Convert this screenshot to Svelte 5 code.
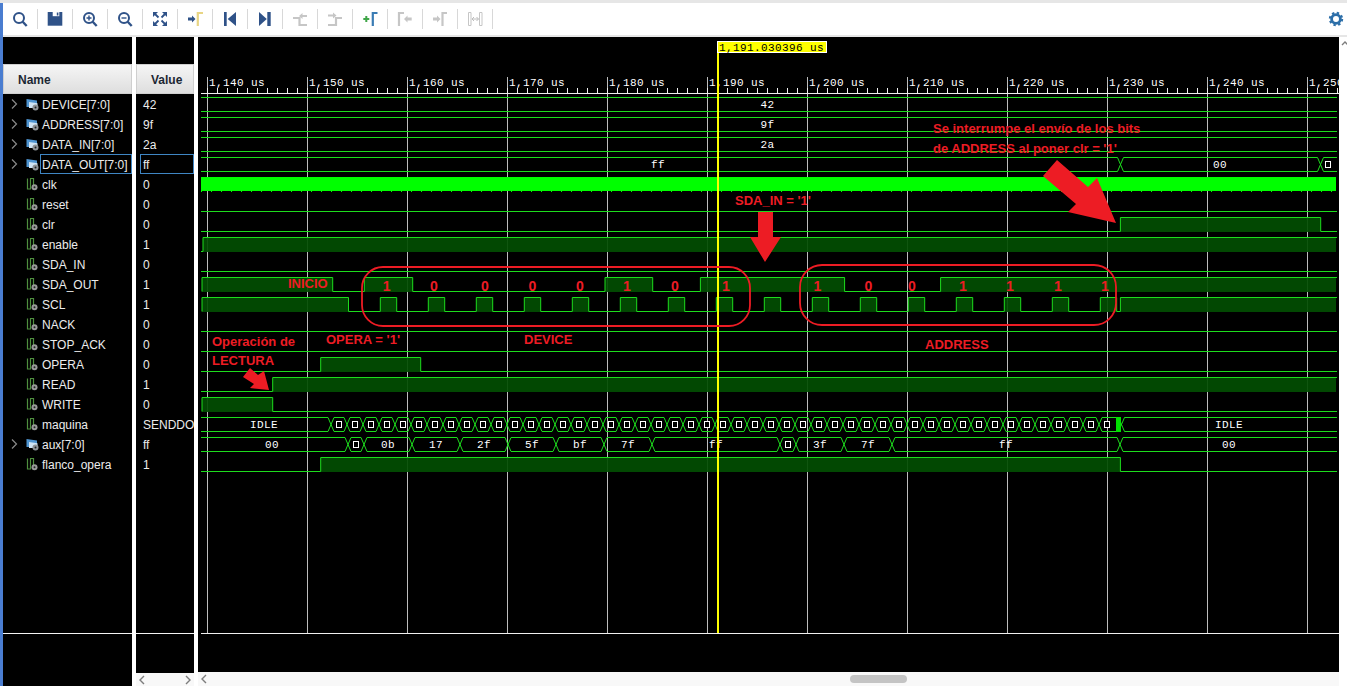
<script>
  const X0 = 201;
  const X1 = 1337;
  const top = (i) => 97.5 + 20 * i;
  const bot = (i) => 111.5 + 20 * i;

  const signals = [
    { name: 'DEVICE[7:0]', value: '42', bus: true },
    { name: 'ADDRESS[7:0]', value: '9f', bus: true },
    { name: 'DATA_IN[7:0]', value: '2a', bus: true },
    { name: 'DATA_OUT[7:0]', value: 'ff', bus: true, selected: true },
    { name: 'clk', value: '0' },
    { name: 'reset', value: '0' },
    { name: 'clr', value: '0' },
    { name: 'enable', value: '1' },
    { name: 'SDA_IN', value: '0' },
    { name: 'SDA_OUT', value: '1' },
    { name: 'SCL', value: '1' },
    { name: 'NACK', value: '0' },
    { name: 'STOP_ACK', value: '0' },
    { name: 'OPERA', value: '0' },
    { name: 'READ', value: '1' },
    { name: 'WRITE', value: '0' },
    { name: 'maquina', value: 'SENDDO' },
    { name: 'aux[7:0]', value: 'ff', bus: true },
    { name: 'flanco_opera', value: '1' }
  ];

  // high intervals of the one bit signals
  const scl = [[202, 348.5]];
  for (let k = 0; k < 16; k++) scl.push([380.3 + 48 * k, 396.7 + 48 * k]);
  scl.push([1120.4, 1336]);

  const digital = [
    { row: 5, high: [] },
    { row: 6, high: [[1120.4, 1320.7]] },
    { row: 7, high: [[203, 1336]] },
    { row: 8, high: [] },
    { row: 9, high: [[202, 332.7], [364.3, 412.7], [605, 652.7], [700.4, 844.6], [940.6, 1336]] },
    { row: 10, high: scl },
    { row: 11, high: [] },
    { row: 12, high: [] },
    { row: 13, high: [[320.7, 420.7]] },
    { row: 14, high: [[272.7, 1336]] },
    { row: 15, high: [[202, 272.7]] },
    { row: 18, high: [[320.7, 1120.4]] }
  ];

  function outline(row, high) {
    const t = top(row);
    const b = bot(row);
    let d = `M${X0} ${b}`;
    if (high.length && high[0][0] < 203) d = `M${high[0][0]} ${b}`;
    for (const [a, e] of high) {
      d += `H${a}V${t}H${e}`;
      if (e < 1336) d += `V${b}`;
    }
    d += `H${X1}`;
    return d;
  }

  function busPath(row, xs) {
    const t = top(row);
    const b = bot(row);
    const w = 3;
    let d = '';
    let from = X0;
    for (const x of xs) {
      d += `M${from} ${t}H${x - w}M${from} ${b}H${x - w}`;
      d += `M${x - w} ${t}L${x + w} ${b}M${x - w} ${b}L${x + w} ${t}`;
      from = x + w;
    }
    d += `M${from} ${t}H${X1}M${from} ${b}H${X1}`;
    return d;
  }

  const maquinaXs = [];
  const maquinaBoxes = [];
  for (let k = 0; k < 49; k++) {
    maquinaXs.push(331 + 16 * k);
    maquinaBoxes.push(339 + 16 * k);
  }
  maquinaXs.push(1121.5);

  const buses = [
    { row: 0, xs: [], labels: [[767.5, '42']], boxes: [] },
    { row: 1, xs: [], labels: [[767.5, '9f']], boxes: [] },
    { row: 2, xs: [], labels: [[767.5, '2a']], boxes: [] },
    { row: 3, xs: [1120.5, 1320.5], labels: [[658, 'ff'], [1220, '00']], boxes: [1328] },
    { row: 16, xs: maquinaXs, labels: [[264, 'IDLE'], [1229, 'IDLE']], boxes: maquinaBoxes },
    {
      row: 17,
      xs: [348, 364, 412, 460, 508, 556, 604, 652, 780, 796, 844, 892, 1120],
      labels: [
        [272, '00'], [388, '0b'], [436, '17'], [484, '2f'], [532, '5f'], [580, 'bf'],
        [628, '7f'], [716, 'ff'], [820, '3f'], [868, '7f'], [1006, 'ff'], [1229, '00']
      ],
      boxes: [356, 788]
    }
  ];

  const majors = [];
  for (let k = 0; k < 12; k++) majors.push({ x: 207 + 100 * k, label: `1,${140 + 10 * k} us` });
  const minors = [];
  for (let x = 207; x < 1338; x += 10) minors.push(x);

  const bits = [
    [386.7, '1'], [434, '0'], [485, '0'], [532.5, '0'], [580, '0'], [627, '1'], [675, '0'], [726, '1'],
    [817.4, '1'], [868.5, '0'], [912, '0'], [963, '1'], [1010, '1'], [1058, '1'], [1105, '1']
  ];
</script>

<div class="strip"></div>
<div class="shell">
  <div class="toolbar">
    <button aria-label="Search">
      <svg viewBox="0 0 20 20"><circle cx="9" cy="9" r="5" class="ring" /><path d="M12.7 12.7L16.7 17" class="handle" /></svg>
    </button>
    <button aria-label="Save">
      <svg viewBox="0 0 20 20"><path d="M2.7 3H17.3V16.7H2.7Z" fill="#2f5288" /><path d="M7.7 3H14.3V7.2H7.7Z" fill="#fff" /><path d="M11.8 3.5H13.4V6.5H11.8Z" fill="#2f5288" /></svg>
    </button>
    <button aria-label="Zoom in">
      <svg viewBox="0 0 20 20"><circle cx="9" cy="9" r="5" class="ring" /><path d="M12.7 12.7L16.7 17" class="handle" /><path d="M6.5 9H11.5M9 6.5V11.5" class="mark" /></svg>
    </button>
    <button aria-label="Zoom out">
      <svg viewBox="0 0 20 20"><circle cx="9" cy="9" r="5" class="ring" /><path d="M12.7 12.7L16.7 17" class="handle" /><path d="M6.5 9H11.5" class="mark" /></svg>
    </button>
    <button aria-label="Zoom fit">
      <svg viewBox="0 0 20 20" fill="#2f5288"><path d="M3 3H8L3 8Z" /><path d="M17 3H12L17 8Z" /><path d="M3 17H8L3 12Z" /><path d="M17 17H12L17 12Z" /><path d="M5 5L8.5 8.5M15 5L11.5 8.5M5 15L8.5 11.5M15 15L11.5 11.5" stroke="#2f5288" stroke-width="1.8" /></svg>
    </button>
    <button aria-label="Go to cursor">
      <svg viewBox="0 0 20 20"><path d="M3 8.5H7V6.5L10.5 10L7 13.5V11.5H3Z" fill="#2f5288" /><path d="M12.8 17V4H18" fill="none" stroke="#e8d584" stroke-width="2.2" /></svg>
    </button>
    <button aria-label="Go to time 0">
      <svg viewBox="0 0 20 20" fill="#2f5288"><path d="M4 3H6.7V17H4Z" /><path d="M7.7 10L16 3V17Z" /></svg>
    </button>
    <button aria-label="Go to last time">
      <svg viewBox="0 0 20 20" fill="#2f5288"><path d="M4 3L11.8 10L4 17Z" /><path d="M12.3 3H15.7V17H12.3Z" /></svg>
    </button>
    <button aria-label="Previous transition">
      <svg viewBox="0 0 20 20"><path d="M3 9H9.5V16H17" class="dim" /><path d="M9 7L12.5 4V6H17V8H12.5V10Z" fill="#c6c6c6" /></svg>
    </button>
    <button aria-label="Next transition">
      <svg viewBox="0 0 20 20"><path d="M3 16H11V9H17" class="dim" /><path d="M11.5 6.5L8 3.5V5.5H3V7.5H8V9.5Z" fill="#c6c6c6" /></svg>
    </button>
    <button aria-label="Add marker">
      <svg viewBox="0 0 20 20"><path d="M3.3 10H9.3M6.3 7V13" fill="none" stroke="#3fa648" stroke-width="2" /><path d="M12.8 17V4H17.5" fill="none" stroke="#3a7cb4" stroke-width="2.2" /></svg>
    </button>
    <button aria-label="Previous marker">
      <svg viewBox="0 0 20 20"><path d="M4 17V4H9" class="dim" /><path d="M9 10L12.5 6.5V8.5H16.7V11.5H12.5V13.5Z" fill="#c6c6c6" /></svg>
    </button>
    <button aria-label="Next marker">
      <svg viewBox="0 0 20 20"><path d="M3 8.5H7V6.5L10.5 10L7 13.5V11.5H3Z" fill="#c6c6c6" /><path d="M12.5 17V4H17" class="dim" /></svg>
    </button>
    <button aria-label="Swap cursors">
      <svg viewBox="0 0 20 20"><path d="M3.5 3.5H6V16.5H3.5ZM14.5 3.5H17V16.5H14.5Z" fill="none" stroke="#c6c6c6" stroke-width="1" /><path d="M7 10H13.5M7 10L9 8M7 10L9 12M13.5 10L11.5 8M13.5 10L11.5 12" fill="none" stroke="#bdbdbd" stroke-width="1" /></svg>
    </button>
    <span class="settings">
      <svg viewBox="0 0 16 16" width="16" height="16"><circle cx="8" cy="8" r="4.4" fill="none" stroke="#2c6ea8" stroke-width="2.8" /><circle cx="8" cy="8" r="6.2" fill="none" stroke="#2c6ea8" stroke-width="2" stroke-dasharray="2.4 2.47" /></svg>
    </span>
  </div>

  <div class="panes">
    <div class="pane names">
      <div class="gutter"></div>
      <div class="head">Name</div>
      {#each signals as s}
        <div class="row">
          <span class="chev">
            {#if s.bus}
              <svg viewBox="0 0 12 12" width="12" height="12"><path d="M4 1.5L8.5 6L4 10.5" fill="none" stroke="#8a8a8a" stroke-width="1.2" /></svg>
            {/if}
          </span>
          <svg class="sig" viewBox="0 0 14 14" width="14" height="14">
            {#if s.bus}
              <path d="M0.5 2L11 3.5V10H0.5Z" fill="#4f95d2" />
              <path d="M3 5L11.5 6.2V11H3Z" fill="#cfe4f5" />
              <circle cx="9.5" cy="10.5" r="3" fill="#8f9499" />
              <circle cx="9.5" cy="10.5" r="1" fill="#20262b" />
            {:else}
              <path d="M1.5 1.5V12H4.5V1.5H7.5V8" fill="none" stroke="#4f8f3f" stroke-width="1.2" />
              <circle cx="8.5" cy="10.3" r="3" fill="#9a9a9a" />
              <circle cx="8.5" cy="10.3" r="1" fill="#222" />
            {/if}
          </svg>
          <span class="label" class:selected={s.selected}>{s.name}</span>
        </div>
      {/each}
      <div class="rule"></div>
    </div>

    <div class="pane values">
      <div class="gutter"></div>
      <div class="head">Value</div>
      {#each signals as s}
        <div class="val" class:selected={s.selected}>{s.value}</div>
      {/each}
      <div class="rule short"></div>
      <div class="hscroll ends">
        <svg viewBox="0 0 6 10" width="6" height="10"><path d="M5 1L1 5L5 9" class="arrow" /></svg>
        <svg viewBox="0 0 6 10" width="6" height="10"><path d="M1 1L5 5L1 9" class="arrow" /></svg>
      </div>
    </div>

    <div class="pane wave">
      <svg class="plot" viewBox="198 37 1141 635" width="1141" height="635">
        <!-- ruler and grid -->
        {#each majors as m}
          <line x1={m.x + 0.5} x2={m.x + 0.5} y1="77" y2="633" class="grid" />
          <text x={m.x + 2} y="86" class="mono">{m.label}</text>
        {/each}
        {#each minors as x}
          <line x1={x + 0.5} x2={x + 0.5} y1="88" y2="93" class="tick" />
        {/each}
        <line x1={X0} x2="1339" y1="93.5" y2="93.5" class="tick" />
        <line x1={X0} x2="1339" y1="633.5" y2="633.5" class="tick" />

        <!-- clk toggles too fast to show at this zoom -->
        <rect x={X0} y="177" width="1135" height="14" fill="#00ff00" />
        <line x1={X0} x2="1336" y1="191.5" y2="191.5" stroke="#00ff00" stroke-dasharray="1 9" />

        {#each digital as sig}
          {#each sig.high as [a, e]}
            <rect x={a} y={top(sig.row)} width={e - a} height="14.5" class="high" />
          {/each}
          <path d={outline(sig.row, sig.high)} class="line" />
        {/each}

        {#each buses as b}
          <path d={busPath(b.row, b.xs)} class="line" />
          {#each b.boxes as x}
            <rect x={x - 2.5} y={top(b.row) + 4} width="5" height="6" class="box" />
          {/each}
          {#each b.labels as [x, t]}
            <text {x} y={top(b.row) + 10.5} text-anchor="middle" class="mono">{t}</text>
          {/each}
        {/each}
        <rect x="1116" y="417" width="5" height="15" fill="#00e000" />

        <!-- cursor -->
        <rect x="717" y="52" width="2" height="581" fill="#ffff00" />
        <rect x="717.5" y="41.5" width="109" height="11" fill="#ffff00" stroke="#fff" />
        <text x="719" y="51" class="mono cursor">1,191.030396 us</text>

        <!-- notes drawn on top of the capture -->
        <rect x="362" y="267" width="388" height="59" rx="21" class="ring-note" />
        <rect x="800" y="265" width="316" height="60" rx="22" class="ring-note" />
        {#each bits as [x, t]}
          <text {x} y="291" text-anchor="middle" class="note bit">{t}</text>
        {/each}
        <text x="933" y="133" class="note">Se interrumpe el envío de los bits</text>
        <text x="933" y="152.5" class="note">de ADDRESS al poner clr = '1'</text>
        <text x="735" y="205" class="note">SDA_IN = '1'</text>
        <text x="288" y="288" class="note">INICIO</text>
        <text x="326" y="344" class="note">OPERA = '1'</text>
        <text x="524" y="344" class="note">DEVICE</text>
        <text x="925" y="349" class="note">ADDRESS</text>
        <text x="212" y="346" class="note">Operación de</text>
        <text x="212" y="365" class="note">LECTURA</text>
        <polygon points="1057,160 1088,187 1097,178 1116,223 1068,212 1076,204 1043,176" class="arrow-note" />
        <polygon points="758,212 773,212 773,237 781,237 765,262 750,237 758,237" class="arrow-note" />
        <polygon points="250,368 258,375 264,371 269,390 250,388 254,384 243,377" class="arrow-note" />
      </svg>
      <div class="hscroll">
        <svg viewBox="0 0 6 10" width="6" height="10"><path d="M5 1L1 5L5 9" class="arrow" /></svg>
        <span class="thumb"></span>
      </div>
    </div>

    <div class="vscroll">
      <svg viewBox="0 0 8 6" width="8" height="6"><path d="M1 5L4 2L7 5" class="arrow" /></svg>
    </div>
  </div>
</div>

<style>
  :global(body) {
    margin: 0;
    background: #fff;
  }

  .strip {
    height: 3px;
    background: #e6e6e6;
  }

  .shell {
    width: 1344px;
    height: 683px;
    border-left: 3px solid #4a7dd0;
    display: flex;
    flex-direction: column;
    overflow: hidden;
    background: #fff;
  }

  .toolbar {
    height: 32px;
    flex: none;
    display: flex;
    align-items: center;
    border-bottom: 2px solid #e6e6e6;
    background: #fff;
  }

  .toolbar button {
    position: relative;
    width: 35px;
    height: 32px;
    padding: 0;
    border: none;
    background: none;
    display: flex;
    align-items: center;
    justify-content: center;
  }

  .toolbar button::after {
    content: '';
    position: absolute;
    right: 0;
    top: 6px;
    height: 20px;
    width: 1px;
    background: #d8d8d8;
  }

  .toolbar button svg {
    width: 20px;
    height: 20px;
    margin-right: 1px;
  }

  .ring {
    fill: none;
    stroke: #2f5288;
    stroke-width: 2;
  }

  .handle {
    fill: none;
    stroke: #2f5288;
    stroke-width: 2.4;
  }

  .mark {
    fill: none;
    stroke: #2f5288;
    stroke-width: 1.4;
  }

  .dim {
    fill: none;
    stroke: #c6c6c6;
    stroke-width: 2.2;
  }

  .settings {
    margin-left: auto;
    margin-right: 3px;
    display: flex;
  }

  .panes {
    flex: 1;
    display: flex;
    min-height: 0;
    gap: 4px;
  }

  .pane {
    display: flex;
    flex-direction: column;
    background: #000;
    color: #ececec;
    font: 12px "Liberation Sans", Arial, sans-serif;
    flex: none;
  }

  .names {
    width: 129px;
  }

  .values {
    width: 58px;
  }

  .wave {
    width: 1141px;
  }

  .gutter {
    height: 27px;
    flex: none;
  }

  .head {
    height: 30px;
    flex: none;
    box-sizing: border-box;
    padding: 1px 0 0 14px;
    display: flex;
    align-items: center;
    font-weight: bold;
    color: #1c2733;
    background: linear-gradient(#f5f5f5, #dedede);
    border: 1px solid #cfcfcf;
  }

  .row {
    height: 20px;
    flex: none;
    display: flex;
    align-items: center;
    padding-left: 5px;
  }

  .chev {
    width: 12px;
    height: 12px;
    margin-right: 6px;
    flex: none;
  }

  .sig {
    flex: none;
  }

  .label {
    flex: 1;
    height: 20px;
    line-height: 22px;
    padding-left: 2px;
    white-space: nowrap;
    overflow: hidden;
  }

  .selected {
    box-shadow: inset 0 0 0 1px #3f86c4;
  }

  .val {
    height: 20px;
    line-height: 22px;
    flex: none;
    padding-left: 3px;
    margin-left: 4px;
    white-space: nowrap;
    overflow: hidden;
  }

  .rule {
    margin-top: 159px;
    height: 1px;
    flex: none;
    background: #f4f4f4;
  }

  .short {
    margin-bottom: auto;
  }

  .hscroll {
    height: 14px;
    flex: none;
    box-sizing: border-box;
    padding: 0 0 0 3px;
    display: flex;
    align-items: center;
    background: #f8f8f8;
  }

  .ends {
    height: 13px;
    padding: 0 3px;
    justify-content: space-between;
  }

  .arrow {
    fill: none;
    stroke: #7d7d7d;
    stroke-width: 1.4;
  }

  .thumb {
    width: 57px;
    height: 8px;
    margin-left: 643px;
    border-radius: 4px;
    background: #c4c4c4;
  }

  .vscroll {
    flex: 1;
    margin-left: -4px;
    padding: 3px 0 0 2px;
    background: #fff;
  }

  .vscroll svg {
    display: block;
  }

  .plot {
    display: block;
    flex: none;
    background: #000;
  }

  .grid {
    stroke: #bdbdbd;
    stroke-width: 1;
  }

  .tick {
    stroke: #f0f0f0;
    stroke-width: 1;
  }

  .mono {
    font: 11px "Liberation Mono", monospace;
    letter-spacing: 0.4px;
    fill: #fff;
  }

  .cursor {
    fill: #000;
  }

  .high {
    fill: #024d02;
    fill-opacity: 0.93;
  }

  .line {
    fill: none;
    stroke: #1ddc1d;
    stroke-width: 1;
  }

  .box {
    fill: #000;
    stroke: #fff;
    stroke-width: 1;
  }

  .note {
    font: bold 13px "Liberation Sans", Arial, sans-serif;
    fill: #ed1c24;
  }

  .bit {
    font-size: 14px;
  }

  .ring-note {
    fill: none;
    stroke: #ed1c24;
    stroke-width: 1.8;
  }

  .arrow-note {
    fill: #ed1c24;
  }
</style>
